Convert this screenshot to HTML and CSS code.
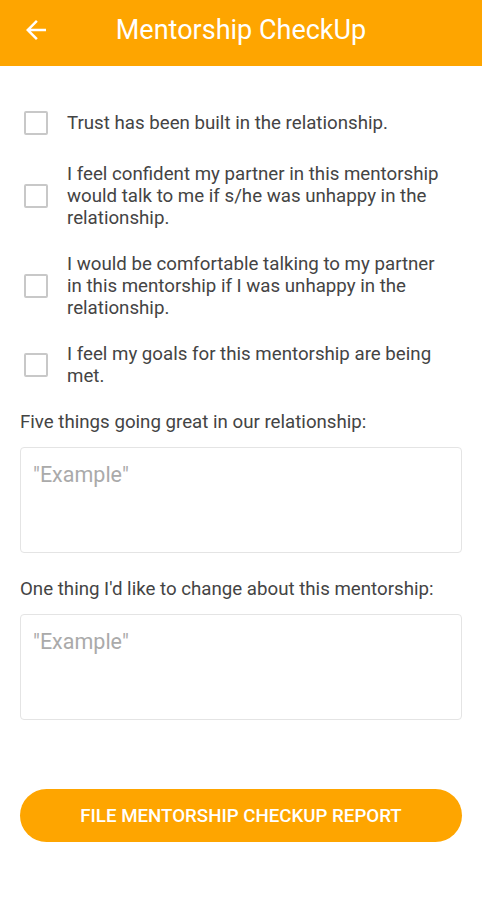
FILE: index.html
```html
<!DOCTYPE html>
<html lang="en">
<head>
<meta charset="UTF-8" />
<meta name="viewport" content="width=device-width, initial-scale=1" />
<title>Mentorship CheckUp</title>
<link rel="stylesheet" href="styles.css">
</head>
<body>

<div class="appbar">
  <button type="button" class="back" title="Back">
    <svg width="30" height="30" viewBox="0 0 24 24"><path d="M20 11H7.83l5.59-5.59L12 4l-8 8 8 8 1.41-1.41L7.83 13H20v-2z" fill="#fff"/></svg>
  </button>
  <div class="title">Mentorship CheckUp</div>
</div>

<div class="content">
  <div class="checks">
    <label class="check"><span class="box"></span><span class="txt">Trust has been built in the relationship.</span></label>
    <label class="check"><span class="box"></span><span class="txt">I feel confident my partner in this mentorship would talk to me if s/he was unhappy in the relationship.</span></label>
    <label class="check"><span class="box"></span><span class="txt">I would be comfortable talking to my partner in this mentorship if I was unhappy in the relationship.</span></label>
    <label class="check"><span class="box"></span><span class="txt">I feel my goals for this mentorship are being met.</span></label>
  </div>

  <div class="field">
    <div class="label">Five things going great in our relationship:</div>
    <div class="area">"Example"</div>
  </div>

  <div class="field">
    <div class="label">One thing I'd like to change about this mentorship:</div>
    <div class="area">"Example"</div>
  </div>

  <button type="button" class="submit">FILE MENTORSHIP CHECKUP REPORT</button>
</div>

</body>
</html>
```

FILE: styles.css
```css
body {
  margin: 0;
  font-family: Roboto, "Noto Sans", Arial, sans-serif;
  background: #fff;
  color: #444;
}
.appbar {
  height: 66px;
  background: #fea500;
  display: flex;
  align-items: center;
}
.back {
  background: none;
  border: none;
  padding: 0;
  margin-left: 21px;
  width: 30px;
  height: 30px;
  margin-top: -6px;
}
.title {
  flex: 1;
  text-align: center;
  color: #fff;
  font-size: 27px;
  margin-right: 51px;
  margin-top: -6px;
}
.content {
  padding: 41px 20px 0;
}
.checks {
  display: flex;
  flex-direction: column;
  gap: 24px;
}
.check {
  display: flex;
  align-items: center;
  min-height: 32px;
  gap: 19px;
  padding-left: 4px;
}
.box {
  flex: none;
  width: 20px;
  height: 20px;
  border: 2px solid #c8c8c8;
  border-radius: 2px;
}
.txt {
  font-size: 18.7px;
  line-height: 22px;
  padding-right: 12px;
}
.field {
  margin-top: 24px;
}
.label {
  font-size: 18.7px;
  line-height: 22px;
}
.area {
  margin-top: 14px;
  height: 106px;
  border: 1px solid #e4e4e4;
  border-radius: 4px;
  padding: 14px 12px;
  box-sizing: border-box;
  color: #aaa;
  font-size: 21.5px;
  line-height: 26px;
}
.field + .field {
  margin-top: 25px;
}
.submit {
  display: block;
  width: 100%;
  margin-top: 69px;
  height: 53px;
  border: none;
  border-radius: 27px;
  background: #fea500;
  color: #fff;
  font-family: Roboto, Arial, sans-serif;
  font-weight: 500;
  font-size: 18.7px;
}
```
